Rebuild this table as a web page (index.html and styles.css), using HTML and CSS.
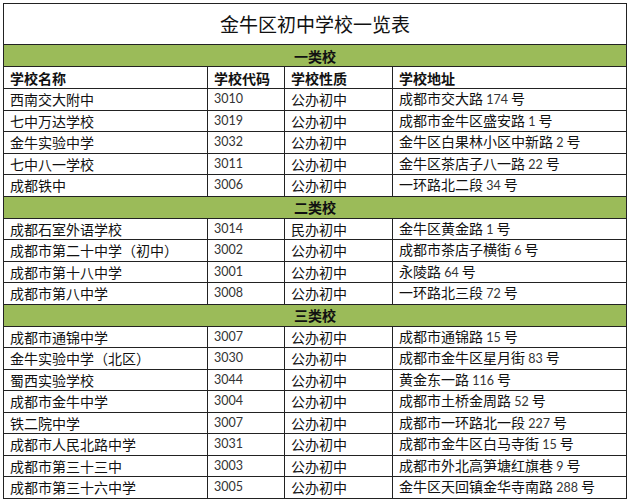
FILE: index.html
```html
<!DOCTYPE html>
<html lang="zh-CN">
<head>
<meta charset="utf-8">
<title>金牛区初中学校一览表</title>
<link rel="stylesheet" href="styles.css">
</head>
<body>
<div class="wrap">
<table class="schools">
  <colgroup>
    <col class="c1"><col class="c2"><col class="c3"><col class="c4">
  </colgroup>
  <tr class="title"><td colspan="4">金牛区初中学校一览表</td></tr>
  <tr class="cat"><td colspan="4">一类校</td></tr>
  <tr class="head"><td>学校名称</td><td>学校代码</td><td>学校性质</td><td>学校地址</td></tr>
  <tr><td>西南交大附中</td><td class="n">3010</td><td>公办初中</td><td>成都市交大路 <span class="n">174</span> 号</td></tr>
  <tr><td>七中万达学校</td><td class="n">3019</td><td>公办初中</td><td>成都市金牛区盛安路 <span class="n">1</span> 号</td></tr>
  <tr><td>金牛实验中学</td><td class="n">3032</td><td>公办初中</td><td>金牛区白果林小区中新路 <span class="n">2</span> 号</td></tr>
  <tr><td>七中八一学校</td><td class="n">3011</td><td>公办初中</td><td>金牛区茶店子八一路 <span class="n">22</span> 号</td></tr>
  <tr><td>成都铁中</td><td class="n">3006</td><td>公办初中</td><td>一环路北二段 <span class="n">34</span> 号</td></tr>
  <tr class="cat"><td colspan="4">二类校</td></tr>
  <tr><td>成都石室外语学校</td><td class="n">3014</td><td>民办初中</td><td>金牛区黄金路 <span class="n">1</span> 号</td></tr>
  <tr><td>成都市第二十中学（初中）</td><td class="n">3002</td><td>公办初中</td><td>成都市茶店子横街 <span class="n">6</span> 号</td></tr>
  <tr><td>成都市第十八中学</td><td class="n">3001</td><td>公办初中</td><td>永陵路 <span class="n">64</span> 号</td></tr>
  <tr><td>成都市第八中学</td><td class="n">3008</td><td>公办初中</td><td>一环路北三段 <span class="n">72</span> 号</td></tr>
  <tr class="cat"><td colspan="4">三类校</td></tr>
  <tr><td>成都市通锦中学</td><td class="n">3007</td><td>公办初中</td><td>成都市通锦路 <span class="n">15</span> 号</td></tr>
  <tr><td>金牛实验中学（北区）</td><td class="n">3030</td><td>公办初中</td><td>成都市金牛区星月街 <span class="n">83</span> 号</td></tr>
  <tr><td>蜀西实验学校</td><td class="n">3044</td><td>公办初中</td><td>黄金东一路 <span class="n">116</span> 号</td></tr>
  <tr><td>成都市金牛中学</td><td class="n">3004</td><td>公办初中</td><td>成都市土桥金周路 <span class="n">52</span> 号</td></tr>
  <tr><td>铁二院中学</td><td class="n">3007</td><td>公办初中</td><td>成都市一环路北一段 <span class="n">227</span> 号</td></tr>
  <tr><td>成都市人民北路中学</td><td class="n">3031</td><td>公办初中</td><td>成都市金牛区白马寺街 <span class="n">15</span> 号</td></tr>
  <tr><td>成都市第三十三中</td><td class="n">3003</td><td>公办初中</td><td>成都市外北高笋塘红旗巷 <span class="n">9</span> 号</td></tr>
  <tr><td>成都市第三十六中学</td><td class="n">3005</td><td>公办初中</td><td>金牛区天回镇金华寺南路 <span class="n">288</span> 号</td></tr>
</table>
</div>
</body>
</html>
```
FILE: styles.css
```css
html, body {
  margin: 0;
  padding: 0;
  background: #ffffff;
}
.wrap {
  padding: 3px 0 0 3px;
}
.schools {
  border-collapse: collapse;
  width: 623px;
  table-layout: fixed;
  font-family: "Noto Sans CJK SC", sans-serif;
  font-size: 14px;
  color: #111;
  border: 1px solid #111;
}
.c1 { width: 204px; }
.c2 { width: 77px; }
.c3 { width: 108px; }
.c4 { width: 234px; }
.schools td {
  border: 1px solid #222;
  padding: 0 0 0 6px;
  height: 20.5px;
  line-height: 18px;
  vertical-align: middle;
  white-space: nowrap;
  overflow: hidden;
}
.schools tr.title td {
  height: 40px;
  text-align: center;
  font-size: 19px;
  padding: 0;
  color: #111;
  background: #fff;
}
.schools tr.cat td {
  background: #9bbb59;
  text-align: center;
  font-weight: bold;
  padding: 0;
  height: 21px;
}
.schools tr.head td {
  font-weight: bold;
  height: 21px;
}
.n {
  font-family: Lato, "Liberation Sans", sans-serif;
  font-size: 12.5px;
  color: #333;
}
```
